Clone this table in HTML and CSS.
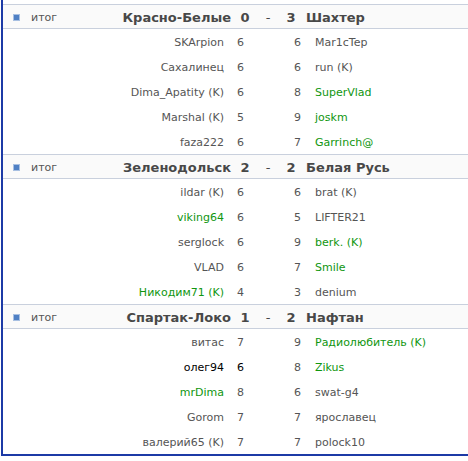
FILE: index.html
```html
<!DOCTYPE html>
<html lang="ru">
<head>
<meta charset="utf-8">
<link rel="stylesheet" href="styles.css">
</head>
<body>
<div class="board">
  <section class="match">
    <div class="head"><div class="hl"><span class="icon"></span><span class="label">итог</span><span class="team-l">Красно-Белые</span></div><span class="sc">0</span><span class="dash">-</span><span class="sc">3</span><span class="team-r">Шахтер</span></div>
    <div class="row"><span class="nl">SKArpion</span><span class="pl">6</span><span class="pr">6</span><span class="nr">Mar1cTep</span></div>
    <div class="row"><span class="nl">Сахалинец</span><span class="pl">6</span><span class="pr">6</span><span class="nr">run (K)</span></div>
    <div class="row"><span class="nl">Dima_Apatity (K)</span><span class="pl">6</span><span class="pr">8</span><span class="nr g">SuperVlad</span></div>
    <div class="row"><span class="nl">Marshal (K)</span><span class="pl">5</span><span class="pr">9</span><span class="nr g">joskm</span></div>
    <div class="row"><span class="nl">faza222</span><span class="pl">6</span><span class="pr">7</span><span class="nr g">Garrinch@</span></div>
  </section>
  <section class="match">
    <div class="head"><div class="hl"><span class="icon"></span><span class="label">итог</span><span class="team-l">Зеленодольск</span></div><span class="sc">2</span><span class="dash">-</span><span class="sc">2</span><span class="team-r">Белая Русь</span></div>
    <div class="row"><span class="nl">ildar (K)</span><span class="pl">6</span><span class="pr">6</span><span class="nr">brat (K)</span></div>
    <div class="row"><span class="nl g">viking64</span><span class="pl">6</span><span class="pr">5</span><span class="nr">LIFTER21</span></div>
    <div class="row"><span class="nl">serglock</span><span class="pl">6</span><span class="pr">9</span><span class="nr g">berk. (K)</span></div>
    <div class="row"><span class="nl">VLAD</span><span class="pl">6</span><span class="pr">7</span><span class="nr g">Smile</span></div>
    <div class="row"><span class="nl g">Никодим71 (K)</span><span class="pl">4</span><span class="pr">3</span><span class="nr">denium</span></div>
  </section>
  <section class="match">
    <div class="head"><div class="hl"><span class="icon"></span><span class="label">итог</span><span class="team-l">Спартак-Локо</span></div><span class="sc">1</span><span class="dash">-</span><span class="sc">2</span><span class="team-r">Нафтан</span></div>
    <div class="row"><span class="nl">витас</span><span class="pl">7</span><span class="pr">9</span><span class="nr g">Радиолюбитель (K)</span></div>
    <div class="row"><span class="nl me">олег94</span><span class="pl me">6</span><span class="pr">8</span><span class="nr g">Zikus</span></div>
    <div class="row"><span class="nl g">mrDima</span><span class="pl">8</span><span class="pr">6</span><span class="nr">swat-g4</span></div>
    <div class="row"><span class="nl">Gorom</span><span class="pl">7</span><span class="pr">7</span><span class="nr">ярославец</span></div>
    <div class="row"><span class="nl">валерий65 (K)</span><span class="pl">7</span><span class="pr">7</span><span class="nr">polock10</span></div>
  </section>
</div>
</body>
</html>
```

FILE: styles.css
```css
html, body {
  margin: 0;
  padding: 0;
  background: #ffffff;
}
body {
  font-family: "DejaVu Sans", Verdana, sans-serif;
  font-size: 11px;
  color: #555555;
}
.board {
  margin-left: 1px;
  padding-top: 4px;
  border-left: 2px solid #1c3aa6;
  border-bottom: 2px solid #1c3aa6;
  width: 465px;
}
.match {
  border-top: 1px solid #c9d0dd;
}
.head {
  display: grid;
  grid-template-columns: 228px 28px 18px 28px 1fr;
  align-items: center;
  box-sizing: border-box;
  height: 24px;
  padding-top: 1px;
  background: #fafafa;
  border-bottom: 1px solid #c9d0dd;
  font-weight: bold;
  font-size: 13px;
  color: #484848;
}
.hl {
  display: flex;
  align-items: center;
}
.icon {
  width: 5px;
  height: 5px;
  margin-left: 10px;
  background: #4f80c4;
  border: 1px solid #a8c0e2;
}
.label {
  margin-left: 11px;
  font-weight: normal;
  font-size: 11px;
  color: #555555;
}
.team-l {
  margin-left: auto;
}
.sc, .dash {
  text-align: center;
}
.dash {
  font-weight: normal;
}
.team-r {
  padding-left: 1px;
}
.row {
  display: grid;
  grid-template-columns: 221px 32px 46px 1fr;
  align-items: center;
  box-sizing: border-box;
  height: 25px;
  padding-top: 1px;
}
.nl {
  text-align: right;
}
.pl {
  padding-left: 13px;
}
.pr {
  text-align: right;
  padding-right: 1px;
}
.nr {
  padding-left: 13px;
}
.g {
  color: #109610;
}
.me {
  color: #000000;
}
```
